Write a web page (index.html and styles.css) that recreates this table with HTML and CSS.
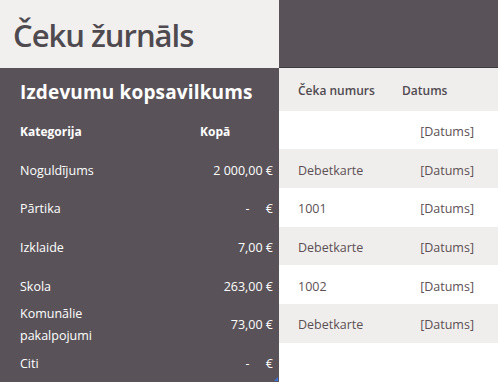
FILE: index.html
```html
<!DOCTYPE html>
<html lang="lv">
<head>
<meta charset="utf-8">
<title>Čeku žurnāls</title>
<link rel="stylesheet" href="styles.css">
</head>
<body>
<div class="page">
  <div class="title-band"><h1 class="title">Čeku žurnāls</h1></div>
  <div class="top-dark"></div>
  <div class="summary">
    <div class="s-head"><h2 class="s-title">Izdevumu kopsavilkums</h2></div>
    <div class="s-row s-colhead"><span class="cat">Kategorija</span><span class="total-h">Kopā</span></div>
    <div class="s-row"><span class="cat">Noguldījums</span><span class="amt">2 000,00 €</span></div>
    <div class="s-row"><span class="cat">Pārtika</span><span class="amt">-&nbsp;&nbsp;&nbsp;&nbsp;&nbsp;€</span></div>
    <div class="s-row"><span class="cat">Izklaide</span><span class="amt">7,00 €</span></div>
    <div class="s-row"><span class="cat">Skola</span><span class="amt">263,00 €</span></div>
    <div class="s-row"><span class="cat two">Komunālie<br>pakalpojumi</span><span class="amt">73,00 €</span></div>
    <div class="s-row"><span class="cat">Citi</span><span class="amt">-&nbsp;&nbsp;&nbsp;&nbsp;&nbsp;€</span></div>
    <span class="handle"></span>
  </div>
  <div class="journal">
    <div class="j-head"><span class="c1">Čeka numurs</span><span class="c2">Datums</span></div>
    <div class="j-row"><span class="c1"></span><span class="c2 date">[Datums]</span></div>
    <div class="j-row alt"><span class="c1">Debetkarte</span><span class="c2 date">[Datums]</span></div>
    <div class="j-row"><span class="c1">1001</span><span class="c2 date">[Datums]</span></div>
    <div class="j-row alt"><span class="c1">Debetkarte</span><span class="c2 date">[Datums]</span></div>
    <div class="j-row"><span class="c1">1002</span><span class="c2 date">[Datums]</span></div>
    <div class="j-row alt"><span class="c1">Debetkarte</span><span class="c2 date">[Datums]</span></div>
  </div>
</div>
</body>
</html>
```
FILE: styles.css
```css
* { box-sizing: border-box; }
html, body { margin: 0; padding: 0; }
body {
  width: 498px;
  height: 382px;
  overflow: hidden;
  background: #ffffff;
  font-family: "Open Sans", "Noto Sans", sans-serif;
}
.page {
  display: grid;
  grid-template-columns: 279px 1fr;
  grid-template-rows: 68px 1fr;
  height: 382px;
}
.title-band {
  background: #f2f0ee;
  display: flex;
  align-items: center;
  padding-left: 13px;
  padding-top: 2px;
}
.title {
  margin: 0;
  font-size: 31px;
  font-weight: 600;
  color: #4f4a50;
  letter-spacing: -1px;
}
.top-dark {
  background: #595359;
  border-bottom: 1px solid #3f3a3f;
}
.summary {
  background: #595359;
  color: #ffffff;
  position: relative;
  padding: 0 6px 0 20px;
}
.s-head {
  height: 42.7px;
  display: flex;
  align-items: center;
  padding-top: 5px;
}
.s-title {
  margin: 0;
  font-size: 19px;
  font-weight: 700;
  letter-spacing: 0.15px;
}
.s-row {
  height: 38.7px;
  display: flex;
  align-items: center;
  padding-top: 3px;
  font-size: 12.5px;
}
.cat { flex: 1; }
.cat.two { line-height: 22px; }
.s-colhead { font-weight: 700; font-size: 12px; }
.total-h { width: 73px; }
.amt { text-align: right; white-space: pre; }
.handle {
  position: absolute;
  right: 1px;
  bottom: 1px;
  width: 0;
  height: 0;
  border-left: 4px solid transparent;
  border-bottom: 4px solid #3a6fd8;
}
.journal {
  color: #5c5054;
  font-size: 12.5px;
}
.j-head, .j-row {
  display: flex;
  align-items: center;
  padding-left: 19px;
  padding-top: 3px;
}
.j-head {
  height: 42.7px;
  background: #f0eeec;
  font-weight: 600;
  font-size: 12px;
  color: #4f4a50;
}
.j-row { height: 38.7px; }
.j-row.alt { background: #f0eeec; }
.c1 { width: 104px; }
.c2 { width: 72px; }
.date { text-align: right; }
```
